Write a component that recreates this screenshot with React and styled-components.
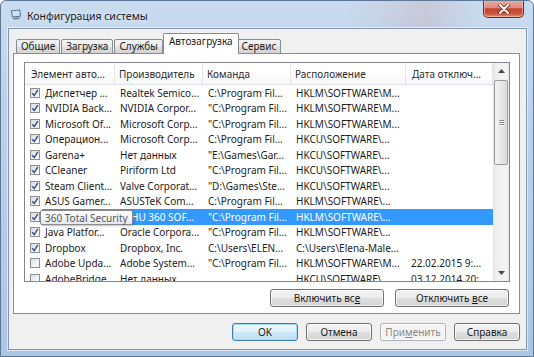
import React from 'react'
import styled, { createGlobalStyle } from 'styled-components'

const GlobalStyle = createGlobalStyle`
  html, body { margin: 0; padding: 0; background: #fff; }
  body { font-family: "Noto Sans", "Open Sans", sans-serif; }
`

const rows = [
  { on: true, name: 'Диспетчер ...', maker: 'Realtek Semico...', cmd: 'C:\\Program Fil...', loc: 'HKLM\\SOFTWARE\\M...', date: '' },
  { on: true, name: 'NVIDIA Back...', maker: 'NVIDIA Corpor...', cmd: '"C:\\Program Fil...', loc: 'HKLM\\SOFTWARE\\M...', date: '' },
  { on: true, name: 'Microsoft Of...', maker: 'Microsoft Corp...', cmd: '"C:\\Program Fil...', loc: 'HKLM\\SOFTWARE\\M...', date: '' },
  { on: true, name: 'Операцион...', maker: 'Microsoft Corp...', cmd: 'C:\\Program Fil...', loc: 'HKCU\\SOFTWARE\\...', date: '' },
  { on: true, name: 'Garena+', maker: 'Нет данных', cmd: '"E:\\Games\\Gar...', loc: 'HKCU\\SOFTWARE\\...', date: '' },
  { on: true, name: 'CCleaner', maker: 'Piriform Ltd', cmd: '"C:\\Program Fil...', loc: 'HKCU\\SOFTWARE\\...', date: '' },
  { on: true, name: 'Steam Client...', maker: 'Valve Corporat...', cmd: '"D:\\Games\\Ste...', loc: 'HKCU\\SOFTWARE\\...', date: '' },
  { on: true, name: 'ASUS Gamer...', maker: 'ASUSTeK Com...', cmd: 'C:\\Program Fil...', loc: 'HKLM\\SOFTWARE\\...', date: '' },
  { on: true, name: '', maker: 'HU 360 SOF...', cmd: '"C:\\Program Fil...', loc: 'HKLM\\SOFTWARE\\...', date: '', sel: true },
  { on: true, name: 'Java Platfor...', maker: 'Oracle Corpora...', cmd: '"C:\\Program Fil...', loc: 'HKLM\\SOFTWARE\\...', date: '' },
  { on: true, name: 'Dropbox', maker: 'Dropbox, Inc.', cmd: 'C:\\Users\\ELEN...', loc: 'C:\\Users\\Elena-Male...', date: '' },
  { on: false, name: 'Adobe Upda...', maker: 'Adobe System...', cmd: '"C:\\Program Fil...', loc: 'HKLM\\SOFTWARE\\M...', date: '22.02.2015 9:...' },
  { on: false, name: 'AdobeBridge', maker: 'Нет данных', cmd: '', loc: 'HKCU\\SOFTWARE\\...', date: '03.12.2014 20:...' },
]

const tabs = ['Общие', 'Загрузка', 'Службы', 'Автозагрузка', 'Сервис']

const App = () => {
  return (
    <>
      <GlobalStyle />
      <Window>
        <TitleBar>
          <AppIcon />
          <Title>Конфигурация системы</Title>
          <CloseButton>
            <svg width="12" height="10" viewBox="0 0 12 10">
              <path d="M2 1 L10 9 M10 1 L2 9" stroke="#5a2018" strokeWidth="3.4" strokeLinecap="round" />
              <path d="M2 1 L10 9 M10 1 L2 9" stroke="#fff" strokeWidth="2" strokeLinecap="round" />
            </svg>
          </CloseButton>
        </TitleBar>

        <Client>
          <TabStrip>
            {tabs.map(t => (
              <Tab key={t} $active={t === 'Автозагрузка'}>{t}</Tab>
            ))}
          </TabStrip>

          <Panel>
            <ListView>
              <ListContent>
                <HeaderRow>
                  <HeaderCell $pad={6}>Элемент авто...</HeaderCell>
                  <HeaderCell>Производитель</HeaderCell>
                  <HeaderCell>Команда</HeaderCell>
                  <HeaderCell>Расположение</HeaderCell>
                  <HeaderCell $pad={6}>Дата отключ...</HeaderCell>
                </HeaderRow>
                {rows.map((r, i) => (
                  <Row key={i} $sel={r.sel}>
                    <NameCell>
                      <CheckBox checked={r.on} />
                      <span>{r.name}</span>
                    </NameCell>
                    <Cell $pad={r.sel ? 16 : 5}>{r.maker}</Cell>
                    <Cell>{r.cmd}</Cell>
                    <Cell>{r.loc}</Cell>
                    <Cell>{r.date}</Cell>
                  </Row>
                ))}
                <Tooltip>360 Total Security</Tooltip>
              </ListContent>
              <ScrollBar>
                <ArrowBox>
                  <svg width="7" height="4" viewBox="0 0 7 4"><path d="M0 4 L3.5 0 L7 4 Z" fill="#4d4d4d" /></svg>
                </ArrowBox>
                <Thumb>
                  <Grip /><Grip /><Grip />
                </Thumb>
                <Track />
                <ArrowBox>
                  <svg width="7" height="4" viewBox="0 0 7 4"><path d="M0 0 L3.5 4 L7 0 Z" fill="#4d4d4d" /></svg>
                </ArrowBox>
              </ScrollBar>
            </ListView>

            <PanelButtons>
              <Button $w={114}>Включить вс<u>е</u></Button>
              <Button $w={114}>Отключить <u>в</u>се</Button>
            </PanelButtons>
          </Panel>

          <Footer>
            <Button $w={66} $default>OK</Button>
            <Button $w={66}>Отмена</Button>
            <Button $w={66} disabled>При<u>м</u>енить</Button>
            <Button $w={66}>Справка</Button>
          </Footer>
        </Client>
      </Window>
    </>
  )
}

const CheckBox = ({ checked }) => (
  <Box>
    {checked &&
      <svg width="8" height="8" viewBox="0 0 8 8">
        <path d="M1.2 4.2 L3.2 6.6 L6.8 1" fill="none" stroke="#3f5294" strokeWidth="1.5" />
      </svg>}
  </Box>
)

const AppIcon = () => (
  <svg width="12" height="11" viewBox="0 0 12 11" style={{ flexShrink: 0 }}>
    <path d="M1 1.5 L10 0.5 L11 7.5 L2 8.5 Z" fill="#4e6585" />
    <path d="M2 2.3 L9.3 1.5 L10 6.8 L2.7 7.6 Z" fill="#cde2f7" />
    <path d="M3 9 L9 8.3 L9.5 10 L3.5 10.6 Z" fill="#6b7a90" />
  </svg>
)

export default App

const Window = styled.div`
width:534px;
height:357px;
box-sizing:border-box;
display:flex;
flex-direction:column;
border:1px solid #5d7896;
border-radius:6px 6px 0 0;
background: linear-gradient(180deg, #c9dbef 0%, #bcd2ea 30%, #abc5e3 100%);
overflow:hidden;
`

const TitleBar = styled.div`
height:27px;
display:flex;
align-items:center;
padding-left:9px;
background: linear-gradient(90deg, rgba(255,255,255,0) 0%, rgba(255,255,255,0) 65%, rgba(196,170,175,0.35) 80%, rgba(255,255,255,0) 90%);
`

const Title = styled.div`
margin-left:5px;
margin-top:2px;
font-size:10.5px;
color:#1c1c1c;
text-shadow: 0 0 6px rgba(255,255,255,0.9);
`

const CloseButton = styled.div`
align-self:flex-start;
margin:-1px 9px 0 auto;
width:41px;
height:18px;
box-sizing:border-box;
display:flex;
align-items:center;
justify-content:center;
border:1px solid #6e2a22;
border-top:none;
border-radius:0 0 5px 5px;
background: linear-gradient(180deg, #eab0a4 0%, #dc8b7c 45%, #c5412f 52%, #cc5340 80%, #e08a70 100%);
box-shadow: inset 0 0 0 1px rgba(255,220,210,0.5);
`

const Client = styled.div`
flex:1;
display:flex;
flex-direction:column;
margin:0 6px 6px 7px;
padding:5px 6px 0 4px;
background:#f0f0f0;
border:1px solid #8397b1;
box-shadow: 0 0 0 1px rgba(255,255,255,0.55);
`

const TabStrip = styled.div`
display:flex;
align-items:flex-end;
height:20px;
padding-left:3px;
margin-bottom:-1px;
position:relative;
z-index:1;
`

const Tab = styled.div`
height:${p => p.$active ? '21px' : '15px'};
box-sizing:border-box;
padding:${p => p.$active ? '1px 5px 0 5px' : '0 4px'};
margin:${p => p.$active ? '0 -2px 0 -1px' : '0 1px 0 0'};
display:flex;
align-items:${p => p.$active ? 'flex-start' : 'center'};
position:relative;
z-index:${p => p.$active ? 2 : 1};
border:1px solid #898c95;
border-bottom:${p => p.$active ? 'none' : '1px solid #898c95'};
border-radius:2px 2px 0 0;
background:${p => p.$active ? '#fff' : 'linear-gradient(180deg, #f3f3f3 0%, #ebebeb 50%, #dfdfdf 51%, #d4d4d4 100%)'};
font-size:10px;
color:#1a1a1a;
line-height:13px;
`

const Panel = styled.div`
height:261px;
box-sizing:border-box;
display:flex;
flex-direction:column;
padding:8px 9px 6px 10px;
background:#fff;
border:1px solid #898c95;
`

const ListView = styled.div`
height:220px;
box-sizing:border-box;
display:flex;
border:1px solid #828790;
`

const ListContent = styled.div`
flex:1;
position:relative;
overflow:hidden;
`

const columns = '90px 88px 88px 115px 87px'

const HeaderRow = styled.div`
display:grid;
grid-template-columns:${columns};
height:22px;
background: linear-gradient(180deg, #ffffff 0%, #ffffff 50%, #f5f6f8 100%);
border-bottom:1px solid #dfe1e5;
box-sizing:border-box;
`

const HeaderCell = styled.div`
display:flex;
align-items:center;
padding-left:${p => p.$pad || 4}px;
border-right:1px solid #e3e5e8;
font-size:10px;
color:#2b2b2b;
white-space:nowrap;
overflow:hidden;
`

const Row = styled.div`
display:grid;
grid-template-columns:${columns};
height:15.5px;
align-items:center;
background:${p => p.$sel ? 'linear-gradient(90deg, transparent 17px, #3399ff 17px)' : 'transparent'};
color:${p => p.$sel ? '#fff' : '#1b1b1b'};
font-size:10px;
`

const Cell = styled.div`
padding-left:${p => p.$pad || 5}px;
white-space:nowrap;
overflow:hidden;
`

const NameCell = styled(Cell)`
display:flex;
align-items:center;
gap:5px;
`

const Box = styled.span`
width:10px;
height:10px;
flex-shrink:0;
box-sizing:border-box;
display:inline-flex;
align-items:center;
justify-content:center;
border:1px solid #8e8f8f;
background: linear-gradient(135deg, #d9dadc 0%, #f2f2f2 60%, #fbfbfb 100%);
`

const Tooltip = styled.div`
position:absolute;
left:15px;
top:147px;
height:15px;
box-sizing:border-box;
padding:0 4px;
display:flex;
align-items:center;
border:1px solid #8a8a8a;
border-radius:2px;
background: linear-gradient(180deg, #ffffff 0%, #e6e7ef 100%);
box-shadow: 1px 1px 2px rgba(0,0,0,0.25);
color:#575757;
font-size:10px;
white-space:nowrap;
`

const ScrollBar = styled.div`
width:16px;
display:flex;
flex-direction:column;
background: linear-gradient(90deg, #e3e3e3 0%, #eeeeee 15%, #f4f4f4 85%, #e8e8e8 100%);
`

const ArrowBox = styled.div`
height:16px;
display:flex;
align-items:center;
justify-content:center;
`

const Thumb = styled.div`
height:85px;
margin:1px 1px 0 1px;
box-sizing:border-box;
display:flex;
flex-direction:column;
align-items:center;
justify-content:center;
gap:1px;
border:1px solid #9b9b9b;
border-radius:2px;
background: linear-gradient(90deg, #f4f4f4 0%, #e8e8e8 50%, #dadada 100%);
`

const Grip = styled.div`
width:5px;
height:1px;
background:#8a8a8a;
box-shadow: 0 1px 0 #fff;
`

const Track = styled.div`
flex:1;
`

const PanelButtons = styled.div`
display:flex;
justify-content:flex-end;
gap:11px;
margin-top:7px;
padding-right:1px;
`

const Footer = styled.div`
display:flex;
justify-content:flex-end;
gap:8px;
margin-top:9px;
`

const Button = styled.button`
width:${p => p.$w}px;
height:18px;
box-sizing:border-box;
padding:0;
border:1px solid ${p => p.$default ? '#3c7fb1' : p.disabled ? '#adb2b5' : '#707070'};
border-radius:3px;
background:${p => p.$default
    ? 'linear-gradient(180deg, #eef7fd 0%, #e2f1fb 50%, #cfe8f7 51%, #c0e0f3 100%)'
    : p.disabled
      ? '#f4f4f4'
      : 'linear-gradient(180deg, #f3f3f3 0%, #ececec 50%, #dfdfdf 51%, #d3d3d3 100%)'};
box-shadow: inset 0 0 0 1px ${p => p.$default ? '#9fdcf7' : 'rgba(255,255,255,0.7)'};
font-family:"Noto Sans", "Open Sans", sans-serif;
font-size:10px;
color:${p => p.disabled ? '#8a8a8a' : '#1b1b1b'};
u { text-underline-offset:1px; }
`
